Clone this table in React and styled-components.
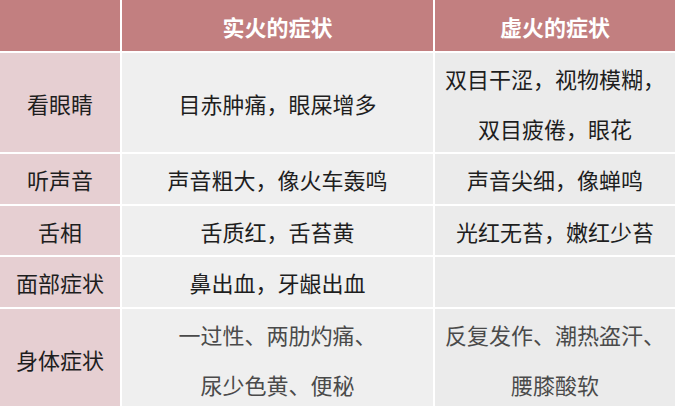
import styled, { createGlobalStyle } from "styled-components";

const GlobalStyle = createGlobalStyle`
  html, body {
    margin: 0;
    padding: 0;
    background: #ffffff;
  }
  body {
    font-family: "Noto Sans CJK SC", "Noto Sans", sans-serif;
  }
`;

const rows = [
  {
    label: "看眼睛",
    shi: ["目赤肿痛，眼屎增多"],
    xu: ["双目干涩，视物模糊，", "双目疲倦，眼花"],
  },
  { label: "听声音", shi: ["声音粗大，像火车轰鸣"], xu: ["声音尖细，像蝉鸣"] },
  { label: "舌相", shi: ["舌质红，舌苔黄"], xu: ["光红无苔，嫩红少苔"] },
  { label: "面部症状", shi: ["鼻出血，牙龈出血"], xu: [] },
  {
    label: "身体症状",
    shi: ["一过性、两肋灼痛、", "尿少色黄、便秘"],
    xu: ["反复发作、潮热盗汗、", "腰膝酸软"],
    soft: true,
  },
];

const App = () => {
  return (
    <>
      <GlobalStyle />
      <Table>
        <HeadCell />
        <HeadCell>实火的症状</HeadCell>
        <HeadCell>虚火的症状</HeadCell>
        {rows.map((row) => (
          <Row key={row.label} row={row} />
        ))}
      </Table>
    </>
  );
};

const Row = ({ row }) => (
  <>
    <LabelCell>{row.label}</LabelCell>
    <BodyCell $soft={row.soft}>
      {row.shi.map((line) => (
        <Line key={line}>{line}</Line>
      ))}
    </BodyCell>
    <BodyCell $soft={row.soft} $alt>
      {row.xu.map((line) => (
        <Line key={line}>{line}</Line>
      ))}
    </BodyCell>
  </>
);

export default App;

const Table = styled.div`
  width: 675px;
  height: 406px;
  display: grid;
  grid-template-columns: 120px 311px 1fr;
  grid-template-rows: 51px 99px 50px 49px 50px 1fr;
  gap: 2px;
  background: #ffffff;
  overflow: hidden;
`;

const Cell = styled.div`
  display: flex;
  flex-direction: column;
  align-items: center;
  justify-content: center;
  font-size: 22px;
  line-height: 50px;
  white-space: nowrap;
`;

const HeadCell = styled(Cell)`
  background: #c27f80;
  color: #ffffff;
  font-weight: 700;
`;

const LabelCell = styled(Cell)`
  background: #e6cfd2;
  color: #1e1e1e;
`;

const BodyCell = styled(Cell)`
  background: ${(p) => (p.$alt ? "#ebebeb" : "#efefef")};
  color: ${(p) => (p.$soft ? "#4a4a4a" : "#1e1e1e")};
`;

const Line = styled.div`
  height: 50px;
`;
